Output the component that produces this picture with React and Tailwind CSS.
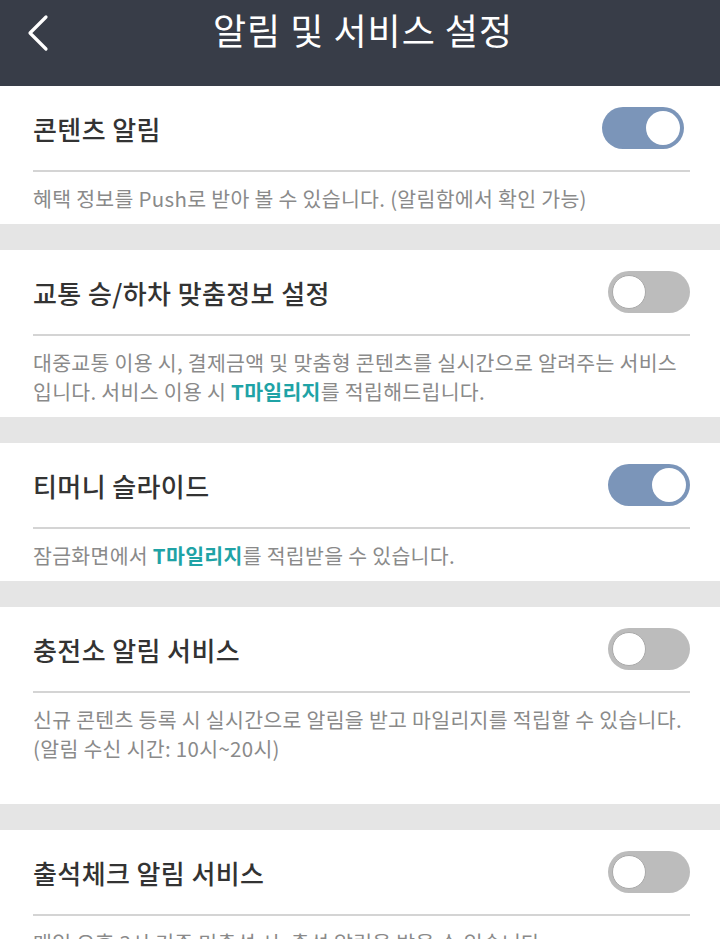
import React from 'react';

const FONT = { fontFamily: '"Noto Sans CJK KR", "Noto Sans", sans-serif' };

const Toggle = ({ on, className = '' }) => (
  <div
    className={`relative w-[82px] h-[42px] rounded-full shrink-0 ${
      on ? 'bg-[#7b95b9]' : 'bg-[#bcbcbc]'
    } ${className}`}
  >
    <div
      className={`absolute top-[4px] w-[34px] h-[34px] rounded-full bg-white ${
        on ? 'right-[4px]' : 'left-[4px] border border-[#a9a9a9]'
      }`}
    />
  </div>
);

const Mileage = () => <span className="font-bold text-[#1fa3a6]">T마일리지</span>;

const Section = ({ title, on, toggleClass, children, extraBottom = '' }) => (
  <section className={`bg-white pl-[33px] pr-[30px] ${extraBottom}`}>
    <div className="h-[84px] flex items-center justify-between">
      <h2 className="text-[26px] font-medium text-[#333333] tracking-[0.4px]">{title}</h2>
      <Toggle on={on} className={toggleClass} />
    </div>
    <div className="h-[2px] bg-[#d4d4d4]" />
    <p className="pt-[12px] pb-[11px] text-[20.5px] leading-[29px] text-[#8a8a8a] tracking-[0.3px] whitespace-nowrap">
      {children}
    </p>
  </section>
);

const Gap = () => <div className="h-[26px] bg-[#e5e5e5]" />;

export default function App() {
  return (
    <div className="w-[720px] h-[939px] overflow-hidden bg-white" style={FONT}>
      {/* Header */}
      <header className="relative h-[86px] bg-[#383d48] flex items-center justify-center">
        <svg
          className="absolute left-[26px] top-[14px]"
          width="26"
          height="38"
          viewBox="0 0 26 38"
          fill="none"
          stroke="white"
          strokeWidth="3.2"
          strokeLinecap="round"
          strokeLinejoin="round"
        >
          <polyline points="20,3 4,19 20,35" />
        </svg>
        <h1 className="text-[36px] font-normal text-white -mt-[28px] ml-[6px] tracking-[1px]">알림 및 서비스 설정</h1>
      </header>

      <Section title="콘텐츠 알림" on toggleClass="mr-[6px]">
        혜택 정보를 Push로 받아 볼 수 있습니다. (알림함에서 확인 가능)
      </Section>
      <Gap />
      <Section title="교통 승/하차 맞춤정보 설정" on={false}>
        대중교통 이용 시, 결제금액 및 맞춤형 콘텐츠를 실시간으로 알려주는 서비스
        <br />
        입니다. 서비스 이용 시 <Mileage />를 적립해드립니다.
      </Section>
      <Gap />
      <Section title="티머니 슬라이드" on>
        잠금화면에서 <Mileage />를 적립받을 수 있습니다.
      </Section>
      <Gap />
      <Section title="충전소 알림 서비스" on={false} extraBottom="pb-[30px]">
        신규 콘텐츠 등록 시 실시간으로 알림을 받고 마일리지를 적립할 수 있습니다.
        <br />
        (알림 수신 시간: 10시~20시)
      </Section>
      <Gap />
      <Section title="출석체크 알림 서비스" on={false}>
        매일 오후 3시 기준 미출석 시, 출석 알림을 받을 수 있습니다.
      </Section>
    </div>
  );
}
